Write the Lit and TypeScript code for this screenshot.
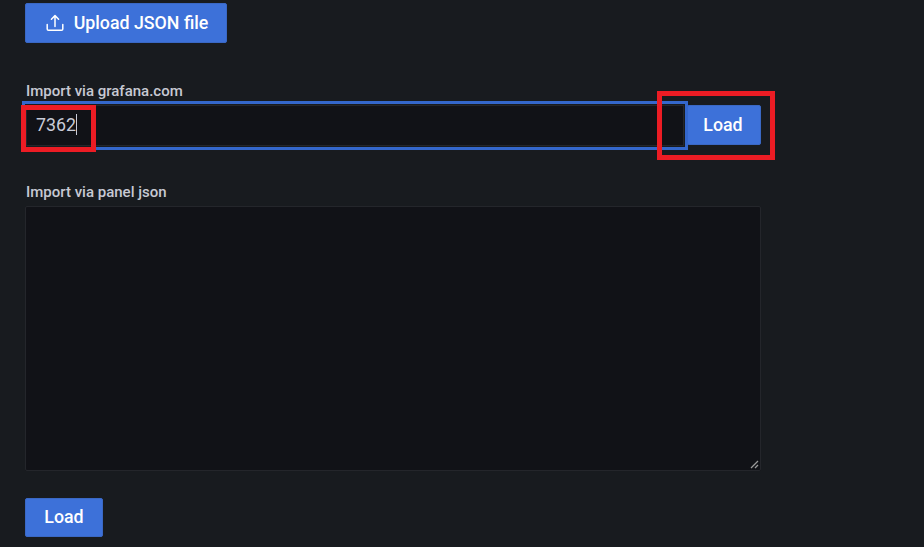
import { LitElement, html, css } from "lit";
import { customElement } from "lit/decorators.js";

@customElement("app-root")
export class AppRoot extends LitElement {
  static styles = css`
    :host {
      display: block;
      position: relative;
      width: 924px;
      height: 547px;
      overflow: hidden;
      background: #181b1f;
      font-family: Roboto, "Liberation Sans", sans-serif;
      color: #ccccdc;
    }
    .page {
      display: flex;
      flex-direction: column;
      align-items: flex-start;
      width: 736px;
      padding: 3px 0 0 25px;
    }
    .btn {
      display: flex;
      align-items: center;
      justify-content: center;
      box-sizing: border-box;
      height: 40px;
      padding-bottom: 2px;
      background: #3d71d9;
      border: 1px solid #3a68c4;
      border-radius: 2px;
      color: #fff;
      font: 500 17.8px Roboto, "Liberation Sans", sans-serif;
    }
    .upload {
      width: 202px;
      gap: 10px;
      padding-left: 2px;
      margin-bottom: 39px;
    }
    .upload svg {
      width: 18px;
      height: 18px;
      flex: none;
      margin-top: 2px;
    }
    .label {
      font-size: 15px;
      font-weight: 500;
      line-height: 18px;
      color: #c7c9d3;
      padding-left: 1px;
    }
    .row {
      display: flex;
      align-items: flex-start;
      width: 100%;
      margin-top: 1px;
      height: 49px;
    }
    .input {
      position: relative;
      z-index: 1;
      box-sizing: border-box;
      flex: 1;
      height: 41px;
      margin: 4px 3px 0 1px;
      display: flex;
      align-items: center;
      padding: 0 0 2px 9px;
      background: #111217;
      border: 1px solid #24262b;
      font-size: 17.8px;
      color: #c9ccd8;
      box-shadow: 0 0 0 1px #181b1f, 0 0 0 4px #3467cc;
    }
    .caret {
      width: 1px;
      height: 21px;
      background: #c9ccd8;
    }
    .load-inline {
      width: 74px;
      padding-right: 2px;
      margin-top: 4px;
    }
    .json-label {
      margin-top: 33px;
    }
    .textarea {
      position: relative;
      box-sizing: border-box;
      width: 100%;
      height: 265px;
      margin-top: 5px;
      background: #111217;
      border: 1px solid #24262b;
      border-radius: 2px;
    }
    .grip {
      position: absolute;
      right: 1px;
      bottom: 1px;
      width: 9px;
      height: 9px;
    }
    .load-bottom {
      width: 78px;
      height: 39px;
      margin-top: 27px;
    }
    .mark {
      position: absolute;
      z-index: 2;
      box-sizing: border-box;
      border: 5px solid #ec1c24;
    }
    .mark-id {
      left: 21px;
      top: 105px;
      width: 75px;
      height: 47px;
    }
    .mark-load {
      left: 657px;
      top: 91px;
      width: 118px;
      height: 69px;
    }
  `;

  render() {
    return html`
      <div class="page">
        <div class="btn upload">
          <svg viewBox="0 0 18 18" fill="none" stroke="#fff" stroke-width="1.5" stroke-linecap="round" stroke-linejoin="round">
            <path d="M1.2 10.5v4.4a1.3 1.3 0 0 0 1.3 1.3h13a1.3 1.3 0 0 0 1.3-1.3v-4.4" />
            <path d="M9 12.5V1.6M5.4 5.2 9 1.6l3.6 3.6" />
          </svg>
          <span>Upload JSON file</span>
        </div>
        <div class="label">Import via grafana.com</div>
        <div class="row">
          <div class="input"><span>7362</span><span class="caret"></span></div>
          <div class="btn load-inline">Load</div>
        </div>
        <div class="label json-label">Import via panel json</div>
        <div class="textarea">
          <svg class="grip" viewBox="0 0 9 9" fill="none" stroke="#9a9a9a" stroke-width="1.3">
            <path d="M1 8 8 1M5 8 8 5" />
          </svg>
        </div>
        <div class="btn load-bottom">Load</div>
      </div>
      <div class="mark mark-id"></div>
      <div class="mark mark-load"></div>
    `;
  }
}
